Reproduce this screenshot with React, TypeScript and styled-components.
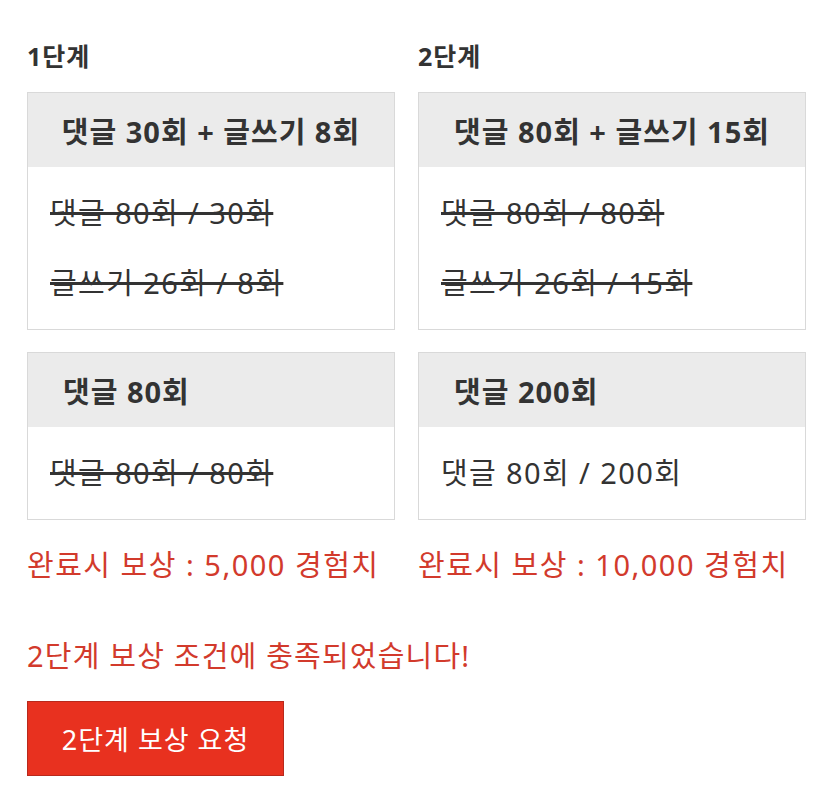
import React from 'react'
import styled, { createGlobalStyle } from 'styled-components'

const Global = createGlobalStyle`
  body {
    margin: 0;
    background: #ffffff;
    font-family: "Noto Sans", "Noto Sans CJK KR", sans-serif;
    color: #333333;
    letter-spacing: 1px;
  }
`

const Page = styled.div`
  padding: 39px 0 0 27px;
`

const Stages = styled.div`
  display: grid;
  grid-template-columns: 368px 388px;
  column-gap: 23px;
`

const Stage = styled.section`
  display: flex;
  flex-direction: column;
`

const StageTitle = styled.h3`
  margin: 0 0 19px;
  font-size: 25px;
  font-weight: 700;
  line-height: 34px;
  color: #333;
`

const Card = styled.div`
  border: 1px solid #d9d9d9;
  margin-bottom: 22px;
  background: #fff;
`

const CardHead = styled.div<{ $center?: boolean }>`
  background: #ebebeb;
  height: 74px;
  display: flex;
  align-items: center;
  justify-content: ${p => (p.$center ? 'center' : 'flex-start')};
  padding: 0 35px;
  font-size: 29px;
  font-weight: 700;
  color: #333;
  white-space: nowrap;
`

const CardBody = styled.div`
  padding: 11px 22px;
`

const Line = styled.div<{ $done?: boolean }>`
  font-size: 29px;
  letter-spacing: 1.4px;
  line-height: 70px;
  height: 70px;
  color: #333;
  text-decoration: ${p => (p.$done ? 'line-through' : 'none')};
  text-decoration-thickness: 3px;
  white-space: nowrap;
`

const Reward = styled.p`
  margin: 5px 0 0;
  font-size: 29px;
  letter-spacing: 1.5px;
  line-height: 36px;
  color: #d23a2c;
  white-space: nowrap;
`

const Notice = styled.p`
  margin: 55px 0 0;
  font-size: 29px;
  letter-spacing: 1.2px;
  line-height: 36px;
  color: #d23a2c;
`

const RequestButton = styled.button`
  margin-top: 27px;
  width: 257px;
  height: 75px;
  background: #e8311f;
  border: 1px solid #b8291c;
  color: #fff;
  font-family: inherit;
  font-size: 27px;
  letter-spacing: 1px;
  cursor: pointer;
`

type Task = { head: string; center?: boolean; lines: { text: string; done: boolean }[] }

const stages: { title: string; tasks: Task[]; reward: string }[] = [
  {
    title: '1단계',
    tasks: [
      {
        head: '댓글 30회 + 글쓰기 8회',
        center: true,
        lines: [
          { text: '댓글 80회 / 30회', done: true },
          { text: '글쓰기 26회 / 8회', done: true },
        ],
      },
      { head: '댓글 80회', lines: [{ text: '댓글 80회 / 80회', done: true }] },
    ],
    reward: '완료시 보상 : 5,000 경험치',
  },
  {
    title: '2단계',
    tasks: [
      {
        head: '댓글 80회 + 글쓰기 15회',
        center: true,
        lines: [
          { text: '댓글 80회 / 80회', done: true },
          { text: '글쓰기 26회 / 15회', done: true },
        ],
      },
      { head: '댓글 200회', lines: [{ text: '댓글 80회 / 200회', done: false }] },
    ],
    reward: '완료시 보상 : 10,000 경험치',
  },
]

const App: React.FC = () => {
  return (
    <Page>
      <Global />
      <Stages>
        {stages.map(s => (
          <Stage key={s.title}>
            <StageTitle>{s.title}</StageTitle>
            {s.tasks.map(t => (
              <Card key={t.head}>
                <CardHead $center={t.center}>{t.head}</CardHead>
                <CardBody>
                  {t.lines.map(l => (
                    <Line key={l.text} $done={l.done}>
                      {l.text}
                    </Line>
                  ))}
                </CardBody>
              </Card>
            ))}
            <Reward>{s.reward}</Reward>
          </Stage>
        ))}
      </Stages>
      <Notice>2단계 보상 조건에 충족되었습니다!</Notice>
      <RequestButton>2단계 보상 요청</RequestButton>
    </Page>
  )
}

export default App
